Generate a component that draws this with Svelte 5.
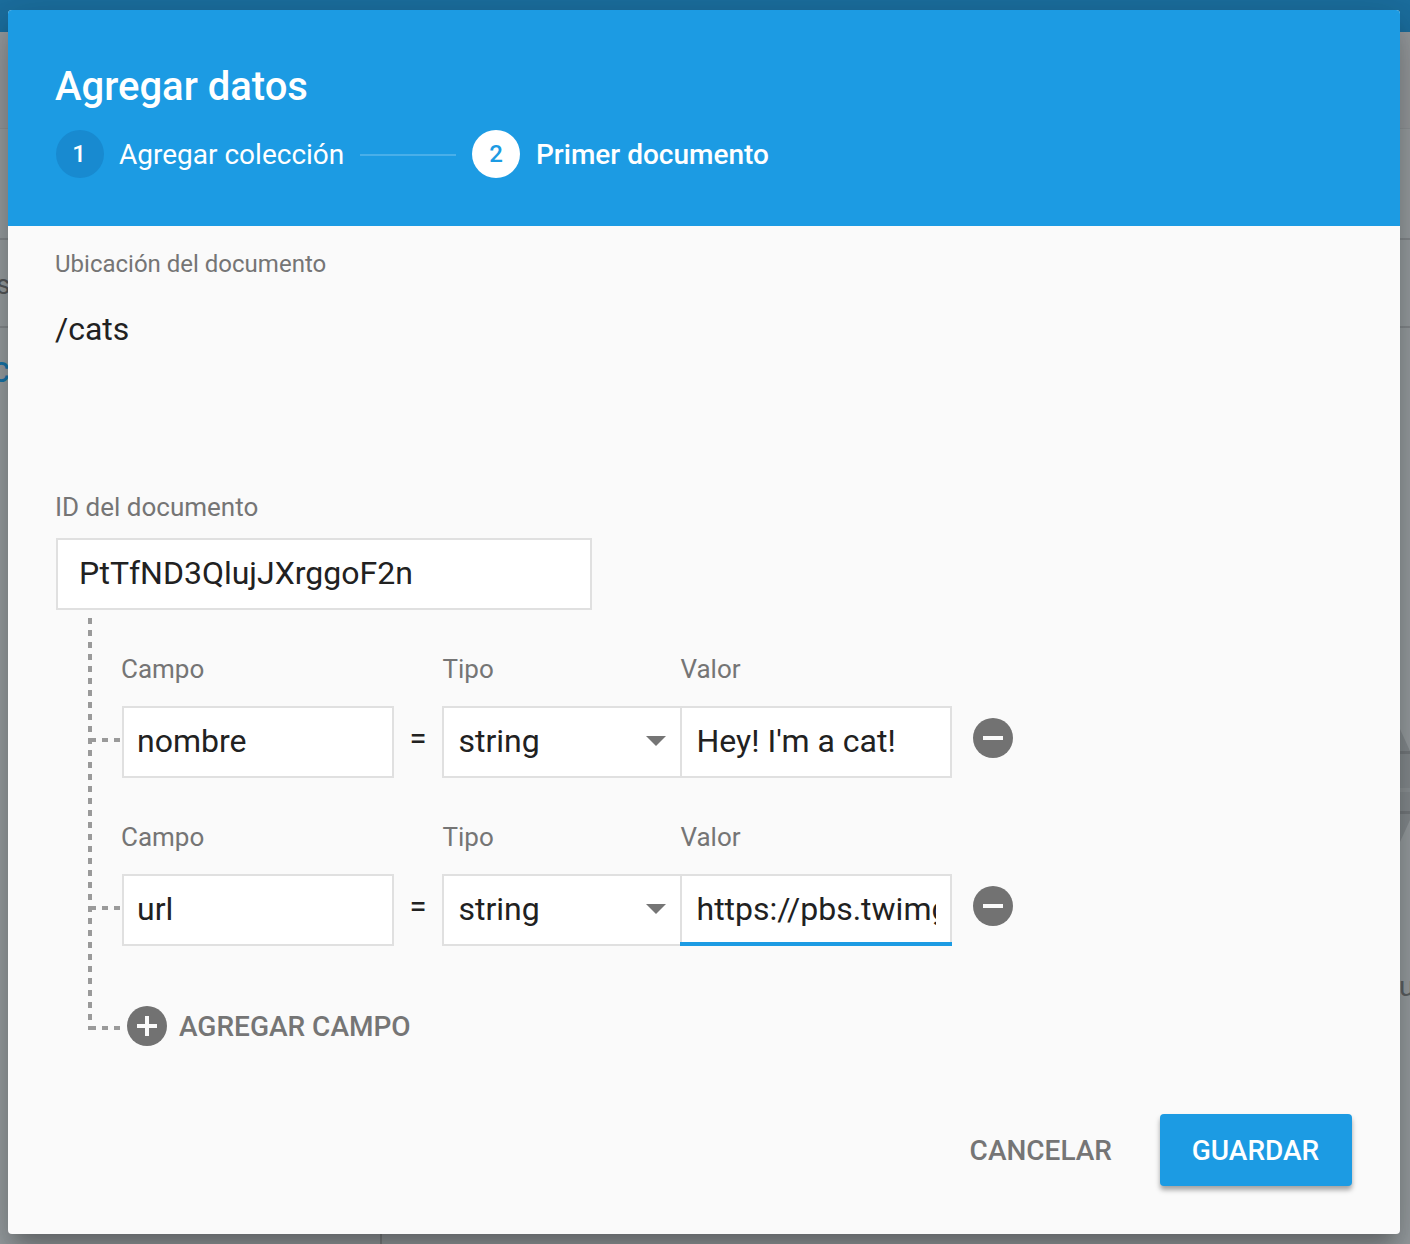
<script>
  const fields = [
    { name: 'nombre', type: 'string', value: "Hey! I'm a cat!", focused: false },
    { name: 'url', type: 'string', value: 'https://pbs.twimg.com/media/', focused: true }
  ];
</script>

<div class="screen">
  <div class="page">
    <div class="topbar"></div>
    <div class="band"></div>
    <div class="tabs"></div>
    <div class="crumb"><span>s</span></div>
    <div class="panels">
      <div class="side"><span>C</span></div>
      <div class="detail">
        <svg class="art" width="10" height="120" viewBox="0 0 10 120">
          <path d="M0 7L10 29V98L0 120Z" fill="#868c8f" />
          <path d="M0 29H10V32H0ZM0 89H10V92H0Z" fill="#767b7e" />
          <path d="M0 66H10V70H0Z" fill="#8e9497" />
        </svg>
        <span>u</span>
      </div>
    </div>
  </div>

  <div class="dialog" role="dialog" aria-label="Agregar datos">
    <header>
      <h2>Agregar datos</h2>
      <div class="steps">
        <span class="num">1</span>
        <span class="step">Agregar colección</span>
        <span class="rule"></span>
        <span class="num active">2</span>
        <span class="step current">Primer documento</span>
      </div>
    </header>

    <main>
      <div class="loc-label">Ubicación del documento</div>
      <div class="loc">/cats</div>
      <div class="label id-label">ID del documento</div>
      <div class="box id-box">PtTfND3QlujJXrggoF2n</div>

      <div class="tree">
        <svg class="lines" width="34" height="414" viewBox="0 0 34 414">
          <g stroke="#9a9a9a" stroke-width="4" stroke-dasharray="6 6">
            <path d="M2 0V408" />
            <path d="M2 122H32" />
            <path d="M2 290H32" />
            <path d="M2 410H32" />
          </g>
          <path d="M0 408H8V412H0Z" fill="#9a9a9a" />
        </svg>
        <div class="rows">
          {#each fields as field}
            <div class="row">
              <div class="col name">
                <div class="label">Campo</div>
                <div class="box">{field.name}</div>
              </div>
              <div class="eq">=</div>
              <div class="col type">
                <div class="label">Tipo</div>
                <div class="box">
                  {field.type}
                  <svg width="20" height="10" viewBox="0 0 20 10"><path d="M0 0H20L10 10Z" fill="#757575" /></svg>
                </div>
              </div>
              <div class="col value">
                <div class="label">Valor</div>
                <div class="box" class:focused={field.focused}><span>{field.value}</span></div>
              </div>
              <svg class="remove" width="40" height="40" viewBox="0 0 40 40">
                <circle cx="20" cy="20" r="20" fill="#727272" />
                <path d="M10 18H30V22H10Z" fill="#fafafa" />
              </svg>
            </div>
          {/each}
          <div class="add">
            <svg width="40" height="40" viewBox="0 0 40 40">
              <circle cx="20" cy="20" r="20" fill="#727272" />
              <path d="M10 18H18V10H22V18H30V22H22V30H18V22H10Z" fill="#fafafa" />
            </svg>
            <span>AGREGAR CAMPO</span>
          </div>
        </div>
      </div>
    </main>

    <footer>
      <div class="cancel">CANCELAR</div>
      <div class="save">GUARDAR</div>
    </footer>
  </div>
</div>

<style>
  :global(body) { margin: 0; overflow: hidden; }
  .screen {
    display: grid;
    width: 1410px;
    height: 1244px;
    overflow: hidden;
    font-family: Roboto, sans-serif;
    background: #999fa2;
  }
  .page, .dialog { grid-area: 1 / 1; }
  .page { display: flex; flex-direction: column; height: 1244px; overflow: hidden; }
  .topbar { height: 32px; background: #1b6e9e; }
  .band { height: 96px; background: #979b9e; }
  .tabs { height: 110px; border-top: 1px solid #8f9497; box-sizing: border-box; }
  .crumb {
    box-sizing: border-box;
    height: 90px;
    border-top: 2px solid #858a8d;
    border-bottom: 2px solid #858a8d;
    font-size: 28px;
    line-height: 90px;
    color: #55585a;
  }
  .crumb span { margin-left: -4px; }
  .panels { flex: 1; display: flex; }
  .side {
    box-sizing: border-box;
    width: 382px;
    border-right: 2px solid #808487;
    padding-top: 25px;
    font-size: 28px;
    line-height: 40px;
    font-weight: 500;
    color: #1876ab;
  }
  .side span { margin-left: -8.5px; }
  .detail {
    flex: 1;
    display: flex;
    flex-direction: column;
    align-items: flex-end;
    padding-top: 394px;
    font-size: 28px;
    line-height: 32px;
    color: #5d6163;
  }
  .detail span { width: 11px; margin-top: 129px; }

  .dialog {
    display: flex;
    flex-direction: column;
    z-index: 1;
    width: 1392px;
    height: 1224px;
    margin: 10px 0 0 8px;
    border-radius: 4px;
    overflow: hidden;
    background: #fafafa;
    color: #212121;
    box-shadow:
      0 14px 16px -8px rgba(0, 0, 0, 0.2),
      0 26px 38px 4px rgba(0, 0, 0, 0.14),
      0 10px 48px 8px rgba(0, 0, 0, 0.12);
  }
  header {
    box-sizing: border-box;
    height: 216px;
    padding: 53px 48px 0;
    background: #1c9be3;
    color: #fff;
  }
  h2 { margin: 0 0 19px; font-size: 40px; line-height: 48px; font-weight: 500; margin-left: -1px; }
  .steps { display: flex; align-items: center; height: 48px; font-size: 28px; line-height: 48px; }
  .num {
    width: 48px;
    height: 48px;
    border-radius: 50%;
    background: #188ad0;
    text-align: center;
    font-size: 24px;
    font-weight: 500;
    text-indent: -2px;
  }
  .num.active { background: #fff; color: #1c9be3; text-indent: 0; }
  .step { width: 240px; box-sizing: border-box; padding: 2px 0 0 15px; white-space: nowrap; }
  .current { font-weight: 500; padding-left: 16px; }
  .rule { width: 96px; height: 2px; margin: 2px 16px 0; background: #49afe9; }

  main { flex: 1; padding: 22px 48px 0; }
  .loc-label { margin-left: -1px; font-size: 24px; line-height: 32px; color: #757575; }
  .loc { margin: 29px 0 0; margin-left: -1px; font-size: 32px; line-height: 40px; }
  .label { font-size: 26px; line-height: 32px; color: #757575; white-space: nowrap; margin-left: -1px; }
  .id-label { margin-top: 142px; }
  .type .label, .value .label { margin-left: 0.5px; }
  .box {
    box-sizing: border-box;
    height: 72px;
    border: 2px solid #e0e0e0;
    padding: 0 14px;
    background: #fff;
    font-size: 32px;
    line-height: 66px;
    white-space: nowrap;
  }
  .name .box { padding-left: 13px; }
  .id-box { width: 536px; margin-top: 15px; padding-left: 21px; }
  .tree { display: flex; margin-left: 32px; }
  .lines { flex: none; margin-top: 8px; }
  .rows { display: flex; flex-direction: column; padding-top: 43px; }
  .row { display: flex; height: 168px; }
  .col .box { margin-top: 21px; }
  .name { width: 272px; }
  .eq { width: 48px; padding-top: 70px; text-align: center; font-size: 31px; line-height: 32px; }
  .type { width: 238px; }
  .type .box {
    display: flex;
    align-items: center;
    justify-content: space-between;
    border-right: 0;
    padding: 0 14px 2px 14.5px;
  }
  .value { width: 272px; }
  .value .box { padding-left: 14.5px; }
  .value .box span { display: block; overflow: hidden; }
  .box.focused { position: relative; }
  .box.focused::after {
    content: '';
    position: absolute;
    left: -2px;
    right: -2px;
    bottom: -2px;
    height: 4px;
    background: #1c9be3;
  }
  .remove { margin: 65px 0 0 20.5px; }
  .add {
    display: flex;
    align-items: center;
    gap: 12px;
    height: 40px;
    margin: 17px 0 0 5px;
    font-size: 28px;
    font-weight: 500;
    color: #757575;
  }
  footer {
    display: flex;
    justify-content: flex-end;
    align-items: center;
    gap: 48px;
    padding: 0 48px 48px;
    font-size: 28px;
    font-weight: 500;
    line-height: 74px;
  }
  .cancel { height: 72px; color: #757575; }
  .save {
    box-sizing: border-box;
    width: 192px;
    height: 72px;
    padding-right: 1px;
    border-radius: 4px;
    background: #1c9be3;
    color: #fff;
    text-align: center;
    box-shadow: 0 4px 5px rgba(0, 0, 0, 0.35);
  }
</style>
